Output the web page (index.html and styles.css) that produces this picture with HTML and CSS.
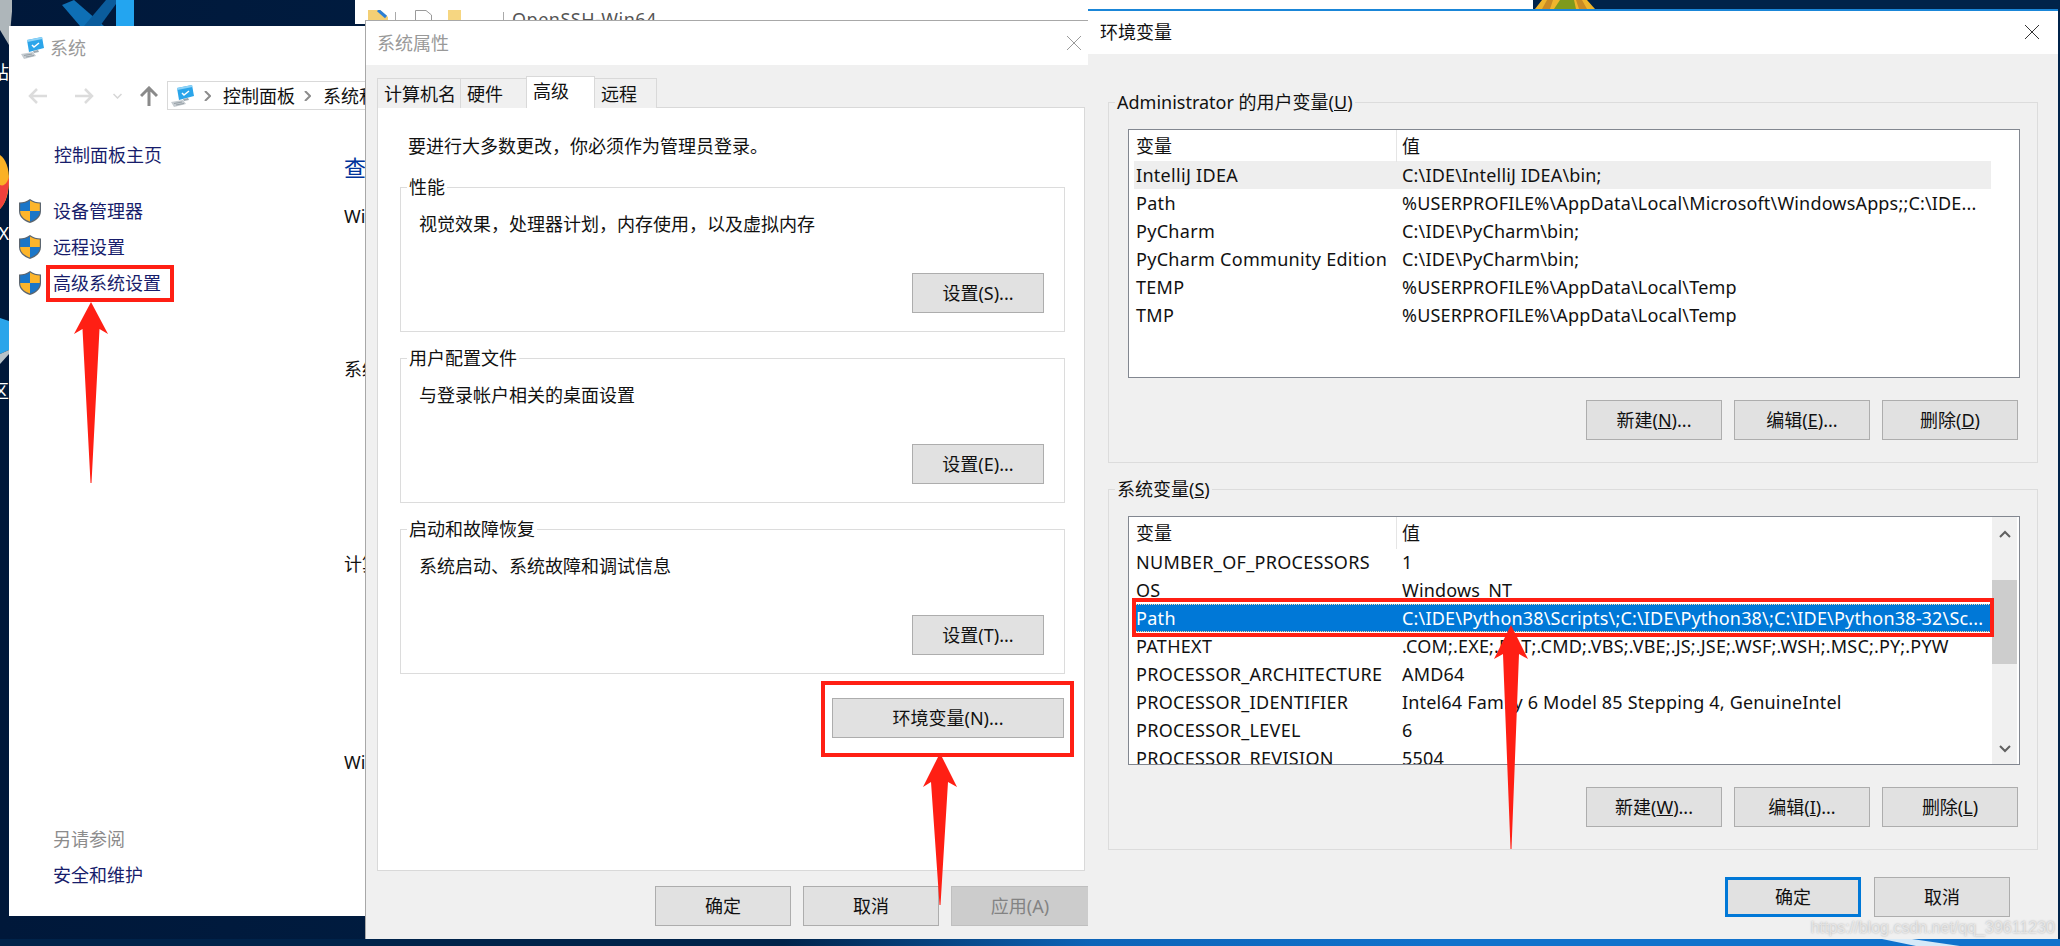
FILE: index.html
```html
<!DOCTYPE html>
<html lang="zh-CN">
<head>
  <meta charset="UTF-8">
  <title>环境变量</title>
  <link rel="stylesheet" href="styles.css">
</head>
<body>
  <svg class="defs" width="0" height="0">
    <defs>
      <symbol id="pc" viewBox="0 0 24 22">
        <path d="M6 3 21 0 23 11 8 15Z" fill="#2ba5ea"/>
        <path d="M6 3 21 0 21.4 2 6.4 5Z" fill="#8fd3f7"/>
        <path d="M11 8l2 2 5-4" fill="none" stroke="#fff" stroke-width="1.5"/>
        <path d="M12 14 17 13 18 15 13 16Z" fill="#9aa7b0"/>
        <path d="M0 17 12 15 15 19 3 22Z" fill="#c5cbd0"/>
        <path d="M3 18.500 11 17M5 20 13 18.500" stroke="#8c959c" stroke-width=".8"/>
      </symbol>
      <symbol id="shield" viewBox="0 0 22 24">
        <path d="M11 0C8 2.500 4 3.500 0 3.500V12C0 18 5 22 11 24 17 22 22 18 22 12V3.500C18 3.500 14 2.500 11 0Z" fill="#5c6670"/>
        <path d="M11 1.500V12H1.200V4.600C5 4.500 8 3.500 11 1.500Z" fill="#1b76c8"/>
        <path d="M11 1.500C14 3.500 17 4.500 20.800 4.600V12H11Z" fill="#fdb52b"/>
        <path d="M1.200 12H11V22.600C6 20.800 1.200 17.500 1.200 12Z" fill="#fdb52b"/>
        <path d="M11 12H20.800C20.800 17.500 16 20.800 11 22.600Z" fill="#1b76c8"/>
      </symbol>
      <symbol id="close" viewBox="0 0 16 16">
        <path d="M1 1 15 15M15 1 1 15" fill="none" stroke="currentColor" stroke-width="1"/>
      </symbol>
    </defs>
  </svg>

  <!-- 桌面上露出来的部分 -->
  <div class="desktop">
    <svg class="desk-item vscode" width="74" height="26" viewBox="0 0 74 26">
      <path d="M0 5 12 0 42 26H18Z" fill="#0e6fb5"/>
      <path d="M22 26 44 0H54V4L38 26Z" fill="#0b5c9c"/>
      <path d="M54 0H72V26H54Z" fill="#23a5f0"/>
    </svg>
    <svg class="desk-item recycle" width="12" height="46" viewBox="0 0 12 46">
      <path d="M0 0H13L9 45 0 30Z" fill="#aeb6ba"/>
    </svg>
    <span class="desk-item desk-label label-a">站</span>
    <svg class="desk-item firefox" width="9" height="54" viewBox="0 0 9 54">
      <path d="M0 0C6 4 9 14 9 24 9 38 6 48 0 54Z" fill="#fbb125"/>
      <path d="M0 30C5 32 8 26 9 22 9 36 6 48 0 54Z" fill="#f0413c"/>
    </svg>
    <span class="desk-item desk-label label-b">OX</span>
    <svg class="desk-item blue-icon" width="9" height="46" viewBox="0 0 9 46">
      <path d="M0 0 9 3V32L0 36Z" fill="#2ba5ea"/>
      <path d="M0 36 9 32V36L0 46Z" fill="#b8c2c8"/>
    </svg>
    <span class="desk-item desk-label label-c">区</span>
    <svg class="desk-item yellow-icon" width="62" height="9" viewBox="0 0 62 9">
      <path d="M1 9 8 0H53L61 9Z" fill="#efb52c"/>
      <path d="M8 9 13 0H19L16 9ZM45 9 42 0H48L53 9Z" fill="#c98a24"/>
      <path d="M20 9 26 0H40L42 9Z" fill="#7f9a1c"/>
    </svg>
    <div class="desk-item taskbar-glow">
      <svg class="glow-streak" width="78" height="7" viewBox="0 0 78 7"><path d="M0 0H30L78 7H34Z" fill="#d5e9f8"/></svg>
    </div>
  </div>

  <!-- 文件夹窗口，只露出顶上一条 -->
  <div class="window window-back">
    <div class="back-row">
      <svg class="back-icon" width="20" height="14" viewBox="0 0 20 14"><path d="M0 0H12L20 7V14H0Z" fill="#f3cf74"/><path d="M10 0 18 7" stroke="#2b7fd6" stroke-width="3"/></svg>
      <span class="back-sep"></span>
      <svg class="back-doc" width="17" height="14" viewBox="0 0 17 14"><path d="M.5.500H11L16.500 5V14H.5Z" fill="#fff" stroke="#9a9a9a"/></svg>
      <svg class="back-folder" width="13" height="14" viewBox="0 0 13 14"><path d="M0 0H13V14H0Z" fill="#f6d681"/></svg>
      <span class="back-sep back-sep-wide"></span>
      <span class="back-title">OpenSSH-Win64</span>
    </div>
  </div>

  <!-- 系统 -->
  <div class="window window-system">
    <div class="system-title">
      <svg class="pc-icon" width="24" height="22"><use href="#pc"/></svg>
      <span>系统</span>
    </div>
    <div class="system-nav">
      <svg class="nav-arrow" width="20" height="16" viewBox="0 0 20 16"><path d="M19 8H2M9 1 2 8l7 7" fill="none" stroke="#dcdcdc" stroke-width="2.500"/></svg>
      <svg class="nav-arrow nav-forward" width="20" height="16" viewBox="0 0 20 16"><path d="M1 8H18M11 1l7 7-7 7" fill="none" stroke="#dcdcdc" stroke-width="2.500"/></svg>
      <svg class="nav-arrow nav-down" width="9" height="6" viewBox="0 0 9 6"><path d="M.5 1 4.500 5l4-4" fill="none" stroke="#d6d6d6" stroke-width="1.500"/></svg>
      <svg class="nav-arrow nav-up" width="18" height="20" viewBox="0 0 18 20"><path d="M9 20V2M1 10l8-8 8 8" fill="none" stroke="#8a8a8a" stroke-width="3"/></svg>
      <div class="address">
        <svg class="pc-icon" width="24" height="22"><use href="#pc"/></svg>
        <svg class="crumb-sep" width="7" height="10" viewBox="0 0 7 10"><path d="M1 0 6 5 1 10" fill="none" stroke="#8c8c8c" stroke-width="2"/></svg>
        <span>控制面板</span>
        <svg class="crumb-sep" width="7" height="10" viewBox="0 0 7 10"><path d="M1 0 6 5 1 10" fill="none" stroke="#8c8c8c" stroke-width="2"/></svg>
        <span>系统和安全</span>
      </div>
    </div>
    <div class="system-body">
      <div class="sidebar">
        <div class="side-link side-home">控制面板主页</div>
        <div class="side-link side-item"><svg width="22" height="24"><use href="#shield"/></svg>设备管理器</div>
        <div class="side-link side-item"><svg width="22" height="24"><use href="#shield"/></svg>远程设置</div>
        <div class="side-link side-item"><svg width="22" height="24"><use href="#shield"/></svg>高级系统设置</div>
        <div class="side-footer">
          <div class="side-muted">另请参阅</div>
          <div class="side-link">安全和维护</div>
        </div>
      </div>
      <div class="system-main">
        <div class="main-heading">查看有关计算机的基本信息</div>
        <div class="main-line main-win">Windows 版本</div>
        <div class="main-line main-sys">系统</div>
        <div class="main-line main-pc">计算机名</div>
        <div class="main-line main-act">Windows 激活</div>
      </div>
    </div>
  </div>

  <!-- 系统属性 -->
  <div class="window window-props">
    <div class="dialog-title props-title">
      <span>系统属性</span>
      <svg width="16" height="16"><use href="#close"/></svg>
    </div>
    <div class="props-body">
      <div class="tabs">
        <div class="tab tab-name">计算机名</div>
        <div class="tab tab-hw">硬件</div>
        <div class="tab tab-active">高级</div>
        <div class="tab tab-remote">远程</div>
      </div>
      <div class="tab-panel">
        <div class="panel-note">要进行大多数更改，你必须作为管理员登录。</div>
        <fieldset class="group props-group">
          <legend>性能</legend>
          <div class="group-text">视觉效果，处理器计划，内存使用，以及虚拟内存</div>
          <div class="group-actions"><button class="btn btn-settings">设置(S)...</button></div>
        </fieldset>
        <fieldset class="group props-group">
          <legend>用户配置文件</legend>
          <div class="group-text">与登录帐户相关的桌面设置</div>
          <div class="group-actions"><button class="btn btn-settings">设置(E)...</button></div>
        </fieldset>
        <fieldset class="group props-group">
          <legend>启动和故障恢复</legend>
          <div class="group-text">系统启动、系统故障和调试信息</div>
          <div class="group-actions"><button class="btn btn-settings">设置(T)...</button></div>
        </fieldset>
        <div class="env-row"><button class="btn btn-env">环境变量(N)...</button></div>
      </div>
      <div class="dialog-actions props-actions">
        <button class="btn btn-footer">确定</button>
        <button class="btn btn-footer">取消</button>
        <button class="btn btn-footer btn-disabled">应用(A)</button>
      </div>
    </div>
  </div>

  <!-- 环境变量 -->
  <div class="window window-env">
    <div class="dialog-title env-title">
      <span>环境变量</span>
      <svg width="16" height="16"><use href="#close"/></svg>
    </div>
    <div class="env-body">
      <fieldset class="group env-group">
        <legend>Administrator 的用户变量(<u>U</u>)</legend>
        <div class="list">
          <div class="list-rows">
            <div class="row row-head"><div>变量</div><div>值</div></div>
            <div class="row row-soft"><div>IntelliJ IDEA</div><div>C:\IDE\IntelliJ IDEA\bin;</div></div>
            <div class="row"><div>Path</div><div>%USERPROFILE%\AppData\Local\Microsoft\WindowsApps;;C:\IDE...</div></div>
            <div class="row"><div>PyCharm</div><div>C:\IDE\PyCharm\bin;</div></div>
            <div class="row"><div>PyCharm Community Edition</div><div>C:\IDE\PyCharm\bin;</div></div>
            <div class="row"><div>TEMP</div><div>%USERPROFILE%\AppData\Local\Temp</div></div>
            <div class="row"><div>TMP</div><div>%USERPROFILE%\AppData\Local\Temp</div></div>
          </div>
        </div>
        <div class="list-actions">
          <button class="btn btn-list">新建(<u>N</u>)...</button>
          <button class="btn btn-list">编辑(<u>E</u>)...</button>
          <button class="btn btn-list">删除(<u>D</u>)</button>
        </div>
      </fieldset>
      <fieldset class="group env-group env-group-sys">
        <legend>系统变量(<u>S</u>)</legend>
        <div class="list">
          <div class="list-rows">
            <div class="row row-head"><div>变量</div><div>值</div></div>
            <div class="row"><div>NUMBER_OF_PROCESSORS</div><div>1</div></div>
            <div class="row"><div>OS</div><div>Windows_NT</div></div>
            <div class="row row-selected"><div>Path</div><div>C:\IDE\Python38\Scripts\;C:\IDE\Python38\;C:\IDE\Python38-32\Sc...</div></div>
            <div class="row"><div>PATHEXT</div><div>.COM;.EXE;.BAT;.CMD;.VBS;.VBE;.JS;.JSE;.WSF;.WSH;.MSC;.PY;.PYW</div></div>
            <div class="row"><div>PROCESSOR_ARCHITECTURE</div><div>AMD64</div></div>
            <div class="row"><div>PROCESSOR_IDENTIFIER</div><div>Intel64 Family 6 Model 85 Stepping 4, GenuineIntel</div></div>
            <div class="row"><div>PROCESSOR_LEVEL</div><div>6</div></div>
            <div class="row"><div>PROCESSOR_REVISION</div><div>5504</div></div>
          </div>
          <div class="scrollbar">
            <svg class="scroll-arrow" width="12" height="8" viewBox="0 0 12 8"><path d="M1 7 6 2l5 5" fill="none" stroke="#606060" stroke-width="2"/></svg>
            <div class="scroll-thumb"></div>
            <svg class="scroll-arrow scroll-arrow-end" width="12" height="8" viewBox="0 0 12 8"><path d="M1 1 6 6l5-5" fill="none" stroke="#606060" stroke-width="2"/></svg>
          </div>
        </div>
        <div class="list-actions">
          <button class="btn btn-list">新建(<u>W</u>)...</button>
          <button class="btn btn-list">编辑(<u>I</u>)...</button>
          <button class="btn btn-list">删除(<u>L</u>)</button>
        </div>
      </fieldset>
      <div class="dialog-actions env-actions">
        <button class="btn btn-list btn-default">确定</button>
        <button class="btn btn-list">取消</button>
      </div>
    </div>
  </div>

  <!-- 红框和红箭头，后来画上去的标注 -->
  <div class="mark mark-side"></div>
  <div class="mark mark-env"></div>
  <div class="mark mark-path"></div>
  <svg class="arrow arrow-side" width="34" height="181" viewBox="0 0 34 181">
    <path d="M17 0 34 32 25.500 27 17.500 181H16.500L8.500 27 0 32Z"/>
  </svg>
  <svg class="arrow arrow-env" width="34" height="152" viewBox="0 0 34 152">
    <path d="M17 0 34 34 25 29 17.500 152H16.500L8 29 0 34Z"/>
  </svg>
  <svg class="arrow arrow-path" width="34" height="224" viewBox="0 0 34 224">
    <path d="M17 0 34 34 25 29 17.500 224H16.500L9 29 0 34Z"/>
  </svg>

  <div class="watermark">https://blog.csdn.net/qq_39611230</div>
</body>
</html>
```

FILE: styles.css
```css
* {
  box-sizing: border-box;
}

body, html {
  margin: 0;
  padding: 0;
  width: 100%;
  height: 100%;
  overflow: hidden;
}

body {
  position: relative;
  font-family: "Noto Sans", "Noto Sans CJK SC", sans-serif;
  font-size: 18px;
  line-height: 24px;
  color: #111;
  background: #001e41;
}

svg {
  display: block;
  flex: none;
}

.defs {
  position: absolute;
}

/* desktop */
.desktop {
  position: absolute;
  inset: 0;
  overflow: hidden;
  background: linear-gradient(90deg, #00183a 0%, #00234a 60%, #00234a 100%);
}

.desk-item {
  position: absolute;
}

.vscode { left: 62px; top: 0; }
.recycle { left: 0; top: 0; }
.firefox { left: 0; top: 155px; }
.blue-icon { left: 0; top: 318px; }
.yellow-icon { left: 1534px; top: 0; }

.desk-label {
  color: #fff;
  font-size: 18px;
  width: 9px;
  overflow: hidden;
  direction: rtl;
  white-space: nowrap;
}

.label-a { left: 0; top: 60px; }
.label-b { left: 0; top: 221px; }
.label-c { left: 0; top: 379px; }

.taskbar-glow {
  left: 0;
  right: 0;
  bottom: 0;
  height: 7px;
  background: linear-gradient(90deg, #00234a 0%, #00234a 38%, #0d64b8 53%, #1172cc 70%, #1172cc 100%);
}

.glow-streak {
  margin-left: 1882px;
}

/* windows */
.window {
  position: absolute;
  overflow: hidden;
}

.window-back {
  left: 355px;
  top: 0;
  width: 1178px;
  height: 24px;
  background: #fff;
}

.back-row {
  display: flex;
  align-items: flex-start;
  padding: 10px 0 0 13px;
}

.back-sep {
  width: 1px;
  height: 12px;
  margin: 2px 0 0 7px;
  background: #aaa;
}

.back-doc { margin-left: 19px; }
.back-folder { margin-left: 16px; }
.back-sep-wide { margin-left: 42px; }

.back-title {
  margin: -3px 0 0 8px;
  letter-spacing: .5px;
  color: #555;
}

.window-system {
  left: 9px;
  top: 26px;
  width: 500px;
  height: 890px;
  background: #fff;
  display: flex;
  flex-direction: column;
}

.system-title {
  display: flex;
  align-items: center;
  gap: 5px;
  height: 44px;
  padding-left: 12px;
  color: #999;
}

.system-nav {
  display: flex;
  align-items: center;
  height: 29px;
  margin-top: 11px;
  padding-left: 19px;
}

.nav-forward { margin-left: 26px; }
.nav-down { margin-left: 19px; }
.nav-up { margin-left: 18px; }

.address {
  display: flex;
  align-items: center;
  height: 29px;
  width: 340px;
  margin-left: 9px;
  padding-left: 3px;
  border: 1px solid #d9d9d9;
  white-space: nowrap;
}

.crumb-sep {
  margin: 0 12px 0 9px;
}

.system-body {
  flex: 1;
  display: flex;
  min-height: 0;
}

.sidebar {
  width: 335px;
  flex: none;
  display: flex;
  flex-direction: column;
  padding: 33px 0 29px 10px;
}

.side-link {
  color: #171d6b;
  line-height: 24px;
}

.side-home {
  padding-left: 35px;
  margin-bottom: 32px;
}

.side-item {
  display: flex;
  align-items: center;
  gap: 12px;
  height: 24px;
  margin-bottom: 12px;
}

.side-footer {
  margin-top: auto;
  padding-left: 34px;
}

.side-muted {
  color: #8c8c8c;
  margin-bottom: 12px;
}

.system-main {
  padding-top: 42px;
  white-space: nowrap;
}

.main-heading {
  font-size: 22px;
  line-height: 30px;
  color: #003399;
}

.main-line {
  color: #111;
}

.main-win { margin-top: 22px; }
.main-sys { margin-top: 129px; }
.main-pc { margin-top: 171px; }
.main-act { margin-top: 174px; }

/* dialogs */
.dialog-title {
  display: flex;
  align-items: center;
  justify-content: space-between;
  background: #fff;
}

.window-props {
  left: 365px;
  top: 20px;
  width: 724px;
  height: 919px;
  border-left: 1px solid #a8a8a8;
  border-top: 1px solid #a8a8a8;
  background: #f0f0f0;
}

.props-title {
  height: 44px;
  padding: 0 7px 0 11px;
  color: #999;
}

.props-title svg { color: #9a9a9a; }

.props-body {
  padding: 12px 0 0 11px;
}

.tabs {
  display: flex;
  align-items: flex-end;
  height: 31px;
  padding-left: 1px;
  margin-bottom: -1px;
  position: relative;
}

.tab {
  height: 30px;
  padding-left: 6px;
  line-height: 30px;
  border: 1px solid #d9d9d9;
  border-bottom: 0;
  background: #f0f0f0;
  margin-left: -1px;
}

.tab-name { width: 84px; }
.tab-hw { width: 67px; }
.tab-remote { width: 63px; }

.tab-active {
  width: 69px;
  height: 32px;
  background: #fff;
  line-height: 28px;
  position: relative;
}

.tab-panel {
  width: 708px;
  height: 764px;
  padding: 26px 0 0 22px;
  background: #fff;
  border: 1px solid #d9d9d9;
}

.panel-note {
  margin-left: 8px;
}

.group {
  margin: 0;
  padding: 0;
  min-width: 0;
  border: 1px solid #dcdcdc;
}

.group legend {
  padding: 0 2px;
  line-height: 24px;
}

.props-group {
  width: 665px;
  height: 157px;
  margin-top: 14px;
  padding: 13px 20px 0 18px;
}

.props-group legend {
  margin-left: -12px;
}

.panel-note + .props-group {
  margin-top: 17px;
}

.group-actions {
  display: flex;
  justify-content: flex-end;
  margin-top: 37px;
}

.btn {
  display: block;
  margin: 0;
  padding: 0;
  font: inherit;
  color: #111;
  background: #e1e1e1;
  border: 1px solid #adadad;
  border-radius: 0;
}

.btn-settings { width: 132px; height: 40px; }

.env-row {
  display: flex;
  justify-content: flex-end;
  margin: 24px 20px 0 0;
}

.btn-env { width: 232px; height: 40px; }

.dialog-actions {
  display: flex;
  justify-content: flex-end;
  gap: 13px;
  margin-top: 15px;
}

.props-actions {
  gap: 12px;
}

.btn-footer { width: 136px; height: 40px; }

.btn-disabled {
  width: 138px;
  background: #ccc;
  border-color: #bfbfbf;
  color: #838383;
}

.window-env {
  left: 1088px;
  top: 9px;
  width: 970px;
  height: 930px;
  border-top: 2px solid #1a86d8;
  background: #f0f0f0;
}

.env-title {
  height: 43px;
  padding: 0 18px 2px 12px;
}

.env-title svg { color: #333; }

.env-body {
  padding: 36px 0 0 20px;
}

.env-group {
  width: 930px;
  height: 373px;
  padding: 15px 19px 0 19px;
}

.env-group legend {
  margin-left: -13px;
}

.env-group-sys {
  margin-top: 14px;
}

.list {
  display: flex;
  width: 892px;
  height: 249px;
  padding-left: 5px;
  overflow: hidden;
  background: #fff;
  border: 1px solid #828790;
}

.list-rows {
  width: 857px;
  flex: none;
}

.row {
  display: grid;
  grid-template-columns: 266px 1fr;
  height: 28px;
  padding-left: 2px;
  line-height: 28px;
  white-space: nowrap;
  letter-spacing: .17px;
}

.row div:first-child {
  letter-spacing: .3px;
}

.row-head {
  height: 31px;
  line-height: 32px;
  letter-spacing: 0;
}

.row-head div:first-child {
  margin-right: 5px;
  border-right: 1px solid #e5e5e5;
  letter-spacing: 0;
}

.row-soft {
  background: #eeeeee;
}

.row-selected {
  background: #0078d7;
  color: #fff;
  outline: 1px dotted #ffd9a8;
  outline-offset: -1px;
}

.scrollbar {
  display: flex;
  flex-direction: column;
  align-items: center;
  width: 25px;
  margin-left: 1px;
  background: #f0f0f0;
}

.scroll-arrow {
  margin-top: 13px;
}

.scroll-thumb {
  align-self: stretch;
  height: 84px;
  margin-top: 42px;
  background: #cdcdcd;
}

.scroll-arrow-end {
  margin-top: auto;
  margin-bottom: 11px;
}

.list-actions {
  display: flex;
  justify-content: flex-end;
  gap: 12px;
  margin-top: 22px;
}

.btn-list { width: 136px; height: 40px; }

.env-actions {
  margin: 27px 48px 0 0;
}

.btn-default {
  border: 3px solid #0078d7;
}

/* annotations */
.mark {
  position: absolute;
  border: 4px solid #ff1f14;
}

.mark-side { left: 46px; top: 265px; width: 128px; height: 37px; }
.mark-env { left: 821px; top: 681px; width: 253px; height: 76px; }
.mark-path { left: 1132px; top: 598px; width: 862px; height: 39px; }

.arrow {
  position: absolute;
  fill: #ff1f14;
}

.arrow-side { left: 74px; top: 302px; }
.arrow-env { left: 923px; top: 753px; }
.arrow-path { left: 1494px; top: 625px; }

.watermark {
  position: absolute;
  right: 5px;
  top: 916px;
  font-family: "Liberation Sans", sans-serif;
  font-size: 16px;
  color: rgba(255, 255, 255, 0.55);
  text-shadow: 0 0 2px rgba(120, 120, 120, 0.6);
}
```
